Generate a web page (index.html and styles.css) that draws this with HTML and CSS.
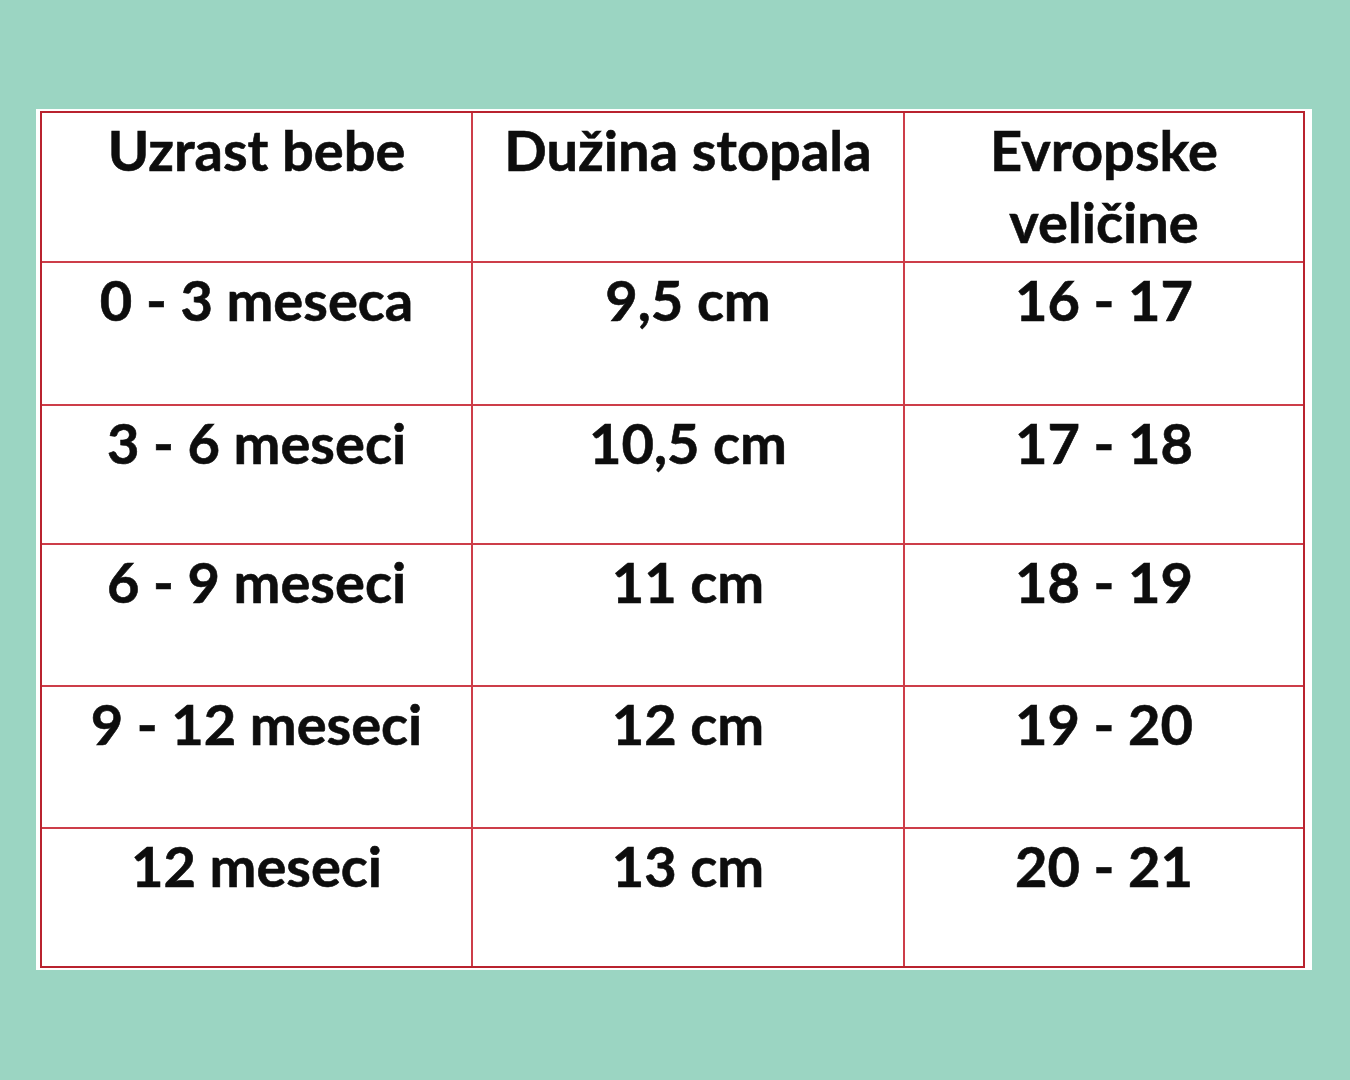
FILE: index.html
```html
<!DOCTYPE html>
<html lang="sr">
<head>
<meta charset="utf-8">
<title>Veličine</title>
<link rel="stylesheet" href="styles.css">
</head>
<body>
<div class="sheet">
  <div class="table">
    <div class="cell">Uzrast bebe</div>
    <div class="cell">Dužina stopala</div>
    <div class="cell">Evropske<br>veličine</div>

    <div class="cell">0 - 3 meseca</div>
    <div class="cell">9,5 cm</div>
    <div class="cell">16 - 17</div>

    <div class="cell">3 - 6 meseci</div>
    <div class="cell">10,5 cm</div>
    <div class="cell">17 - 18</div>

    <div class="cell">6 - 9 meseci</div>
    <div class="cell">11 cm</div>
    <div class="cell">18 - 19</div>

    <div class="cell">9 - 12 meseci</div>
    <div class="cell">12 cm</div>
    <div class="cell">19 - 20</div>

    <div class="cell">12 meseci</div>
    <div class="cell">13 cm</div>
    <div class="cell">20 - 21</div>
  </div>
</div>
</body>
</html>
```
FILE: styles.css
```css
html, body {
  margin: 0;
  padding: 0;
}
body {
  background: #9bd5c2;
  width: 1350px;
  height: 1080px;
  padding: 109px 0 0 36px;
  box-sizing: border-box;
  font-family: "Lato", "Liberation Sans", sans-serif;
}
.sheet {
  background: #ffffff;
  width: 1276px;
  box-sizing: border-box;
  padding: 2px 7px 2px 4px;
}
.table {
  display: grid;
  grid-template-columns: 429px 430px 398px;
  grid-template-rows: 148px 141px 137px 140px 140px 137px;
  gap: 2px;
  background: #cd3d49;
  border: 2px solid #b9232f;
}
.cell {
  background: #ffffff;
  text-align: center;
  font-weight: 700;
  font-size: 56px;
  line-height: 72px;
  color: #0d0d0d;
  padding-top: 1px;
  -webkit-text-stroke: 0.6px #0d0d0d;
}
```
